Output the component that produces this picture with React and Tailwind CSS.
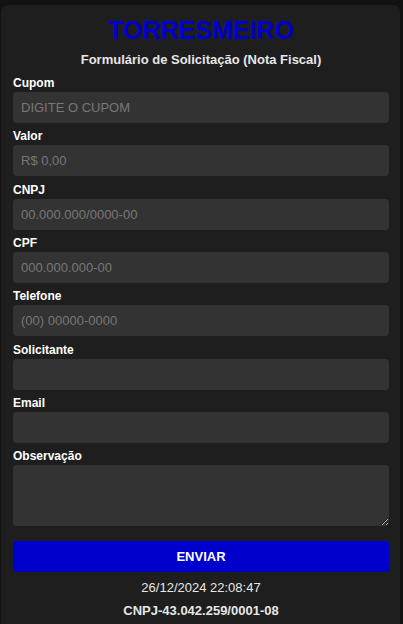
import React from "react";

const fields = [
  { label: "Cupom", ph: "DIGITE O CUPOM" },
  { label: "Valor", ph: "R$ 0,00" },
  { label: "CNPJ", ph: "00.000.000/0000-00" },
  { label: "CPF", ph: "000.000.000-00" },
  { label: "Telefone", ph: "(00) 00000-0000" },
  { label: "Solicitante", ph: "" },
  { label: "Email", ph: "" },
];

export default function App() {
  return (
    <div className="min-h-[624px] bg-[#121212] pt-[5px] px-[1px] [font-family:'Liberation_Sans',Arial,sans-serif] [color-scheme:dark]">
      <div className="w-[399px] min-h-[619px] bg-[#1e1e1e] rounded-t-[7px] pl-[12px] pr-[11px] pt-[11px]">
        <h1 className="text-center text-[25px] leading-[28px] font-bold text-[#0000cc]">TORRESMEIRO</h1>
        <h2 className="mt-[8px] text-center text-[13px] leading-[16px] font-bold text-[#e6e6e6]">
          Formulário de Solicitação (Nota Fiscal)
        </h2>
        <div className="mt-[8px] flex flex-col gap-[6.33px]">
          {fields.map((f) => (
            <div key={f.label} className="flex flex-col">
              <label className="text-[12px] leading-[15px] font-bold text-white mb-[1px]">{f.label}</label>
              <input
                placeholder={f.ph}
                className="h-[31px] w-full rounded-[4px] bg-[#333333] px-[8px] text-[13px] text-white placeholder:text-[#777777] outline-none"
              />
            </div>
          ))}
          <div className="flex flex-col">
            <label className="text-[12px] leading-[15px] font-bold text-white mb-[1px]">Observação</label>
            <textarea className="h-[61px] w-full rounded-[4px] bg-[#333333] px-[8px] py-[6px] text-[13px] text-white outline-none block" />
          </div>
        </div>
        <button className="mt-[15px] h-[31px] w-full rounded-[3px] bg-[#0000cc] text-[13px] font-bold text-white">
          ENVIAR
        </button>
        <p className="mt-[7.5px] text-center text-[13px] leading-[16px] text-[#e6e6e6]">26/12/2024 22:08:47</p>
        <p className="mt-[7px] text-center text-[13px] leading-[16px] font-bold text-[#e6e6e6]">CNPJ-43.042.259/0001-08</p>
      </div>
    </div>
  );
}
